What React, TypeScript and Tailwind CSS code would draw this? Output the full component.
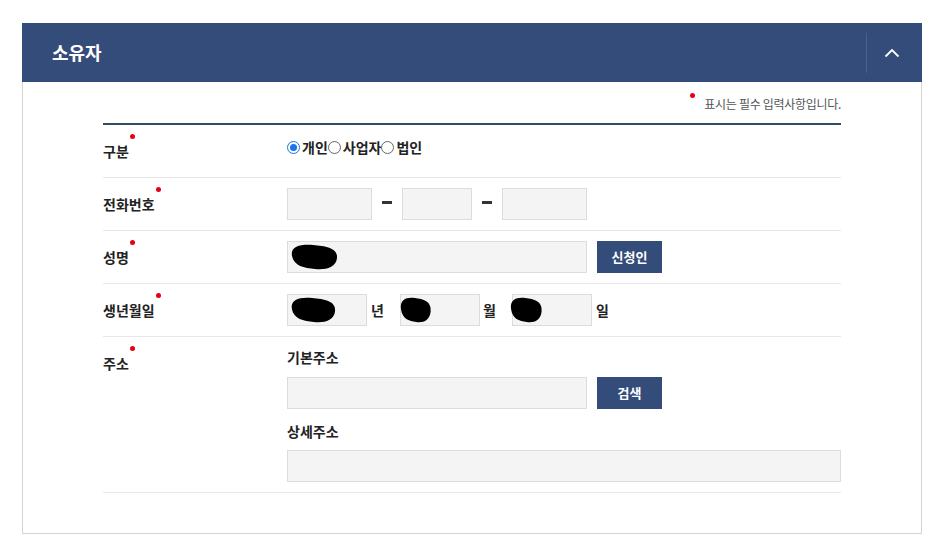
import React from "react";

const font = { fontFamily: '"Noto Sans CJK KR", "Noto Sans", sans-serif' };

function Dot({ className = "" }: { className?: string }) {
  return <span className={`absolute w-[5px] h-[5px] rounded-full bg-[#e60012] ${className}`} />;
}

function Label({ text }: { text: string }) {
  return (
    <div className="w-[184px] shrink-0 h-8 flex items-center">
      <span className="relative text-[14px] leading-5 font-bold text-[#222]">
        {text}
        <Dot className="-top-[7px] -right-[6px]" />
      </span>
    </div>
  );
}

function Blob({ w, x = 1 }: { w: number; x?: number }) {
  return (
    <svg
      width={w}
      height="32"
      viewBox="0 0 50 32"
      preserveAspectRatio="none"
      className="absolute top-[-1px]"
      style={{ left: x }}
    >
      <path d="M3 15 C1 5 12 3 24 4 C37 5 49 7 48 17 C47 27 36 29 26 28 C15 27 5 25 3 15 Z" fill="#000" />
    </svg>
  );
}

function Input({ w, blob, bx }: { w: string; blob?: number; bx?: number }) {
  return (
    <div className={`relative h-8 ${w} bg-[#f4f4f4] border border-[#dcdcdc]`}>
      {blob ? <Blob w={blob} x={bx} /> : null}
    </div>
  );
}

function Btn({ text }: { text: string }) {
  return (
    <button className="h-8 w-[65px] ml-[10px] bg-[#344c79] text-white text-[13px] font-bold">{text}</button>
  );
}

function Dash() {
  return (
    <span className="w-[30px] flex justify-center -mt-[4px]">
      <span className="w-[10px] h-[3px] bg-[#333]" />
    </span>
  );
}

function Radio({ checked, label }: { checked?: boolean; label: string }) {
  return (
    <span className="flex items-center">
      <span
        className={`w-[13px] h-[13px] rounded-full border ${
          checked ? "border-[#1a73e8] border-[1.5px] flex items-center justify-center" : "border-[#666]"
        } mr-[2px]`}
      >
        {checked && <span className="w-[7px] h-[7px] rounded-full bg-[#1a73e8]" />}
      </span>
      <span className="text-[14px] font-bold text-[#222]">{label}</span>
    </span>
  );
}

export default function App() {
  return (
    <div className="bg-white w-[942px] h-[550px] pt-[23px] pl-[22px]" style={font}>
      <div className="w-[900px] border-x border-b border-[#d4d4d4]">
        {/* header */}
        <div className="h-[59px] -mx-px bg-[#344c79] flex items-center">
          <h2 className="flex-1 pl-[30px] text-white text-[18px] font-bold">소유자</h2>
          <div className="h-[40px] w-px bg-[#4a6090]" />
          <div className="w-[55px] flex items-center pl-[17px]">
            <svg width="16" height="10" viewBox="0 0 16 10" fill="none">
              <path d="M1.5 8.5 L8 2 L14.5 8.5" stroke="white" strokeWidth="1.8" />
            </svg>
          </div>
        </div>

        <div className="px-[80px] pb-[40px]">
          <div className="flex justify-end items-center h-[41px] pt-[2px]">
            <span className="relative text-[12px] text-[#555] tracking-[-0.3px]">
              <Dot className="-left-[14px] -top-[2px] w-[4px] h-[4px]" />
              표시는 필수 입력사항입니다.
            </span>
          </div>

          <div className="border-t-2 border-[#344c5f]">
            <div className="flex py-[10px] border-b border-[#e8e8e8]">
              <Label text="구분" />
              <div className="h-8 flex items-center -mt-[4px]">
                <Radio checked label="개인" />
                <Radio label="사업자" />
                <Radio label="법인" />
              </div>
            </div>

            <div className="flex py-[10px] border-b border-[#e8e8e8]">
              <Label text="전화번호" />
              <div className="flex items-center">
                <Input w="w-[85px]" />
                <Dash />
                <Input w="w-[70px]" />
                <Dash />
                <Input w="w-[85px]" />
              </div>
            </div>

            <div className="flex py-[10px] border-b border-[#e8e8e8]">
              <Label text="성명" />
              <div className="flex items-center">
                <Input w="w-[300px]" blob={50} />
                <Btn text="신청인" />
              </div>
            </div>

            <div className="flex py-[10px] border-b border-[#e8e8e8]">
              <Label text="생년월일" />
              <div className="flex items-center">
                <Input w="w-[80px]" blob={48} bx={1} />
                <span className="w-[33px] pl-[4px] text-[14px] font-bold text-[#222]">년</span>
                <Input w="w-[80px]" blob={33} bx={-2} />
                <span className="w-[32px] pl-[3px] text-[14px] font-bold text-[#222]">월</span>
                <Input w="w-[80px]" blob={34} bx={-4} />
                <span className="pl-[4px] text-[14px] font-bold text-[#222]">일</span>
              </div>
            </div>

            <div className="flex pt-[10px] pb-[10px] border-b border-[#e8e8e8]">
              <Label text="주소" />
              <div className="flex-1 flex flex-col">
                <div className="text-[14px] font-bold text-[#222] leading-5 mb-[10px]">기본주소</div>
                <div className="flex items-center">
                  <Input w="w-[300px]" />
                  <Btn text="검색" />
                </div>
                <div className="text-[14px] font-bold text-[#222] leading-5 mt-[12px] mb-[9px]">상세주소</div>
                <Input w="w-full" />
              </div>
            </div>
          </div>
        </div>
      </div>
    </div>
  );
}
